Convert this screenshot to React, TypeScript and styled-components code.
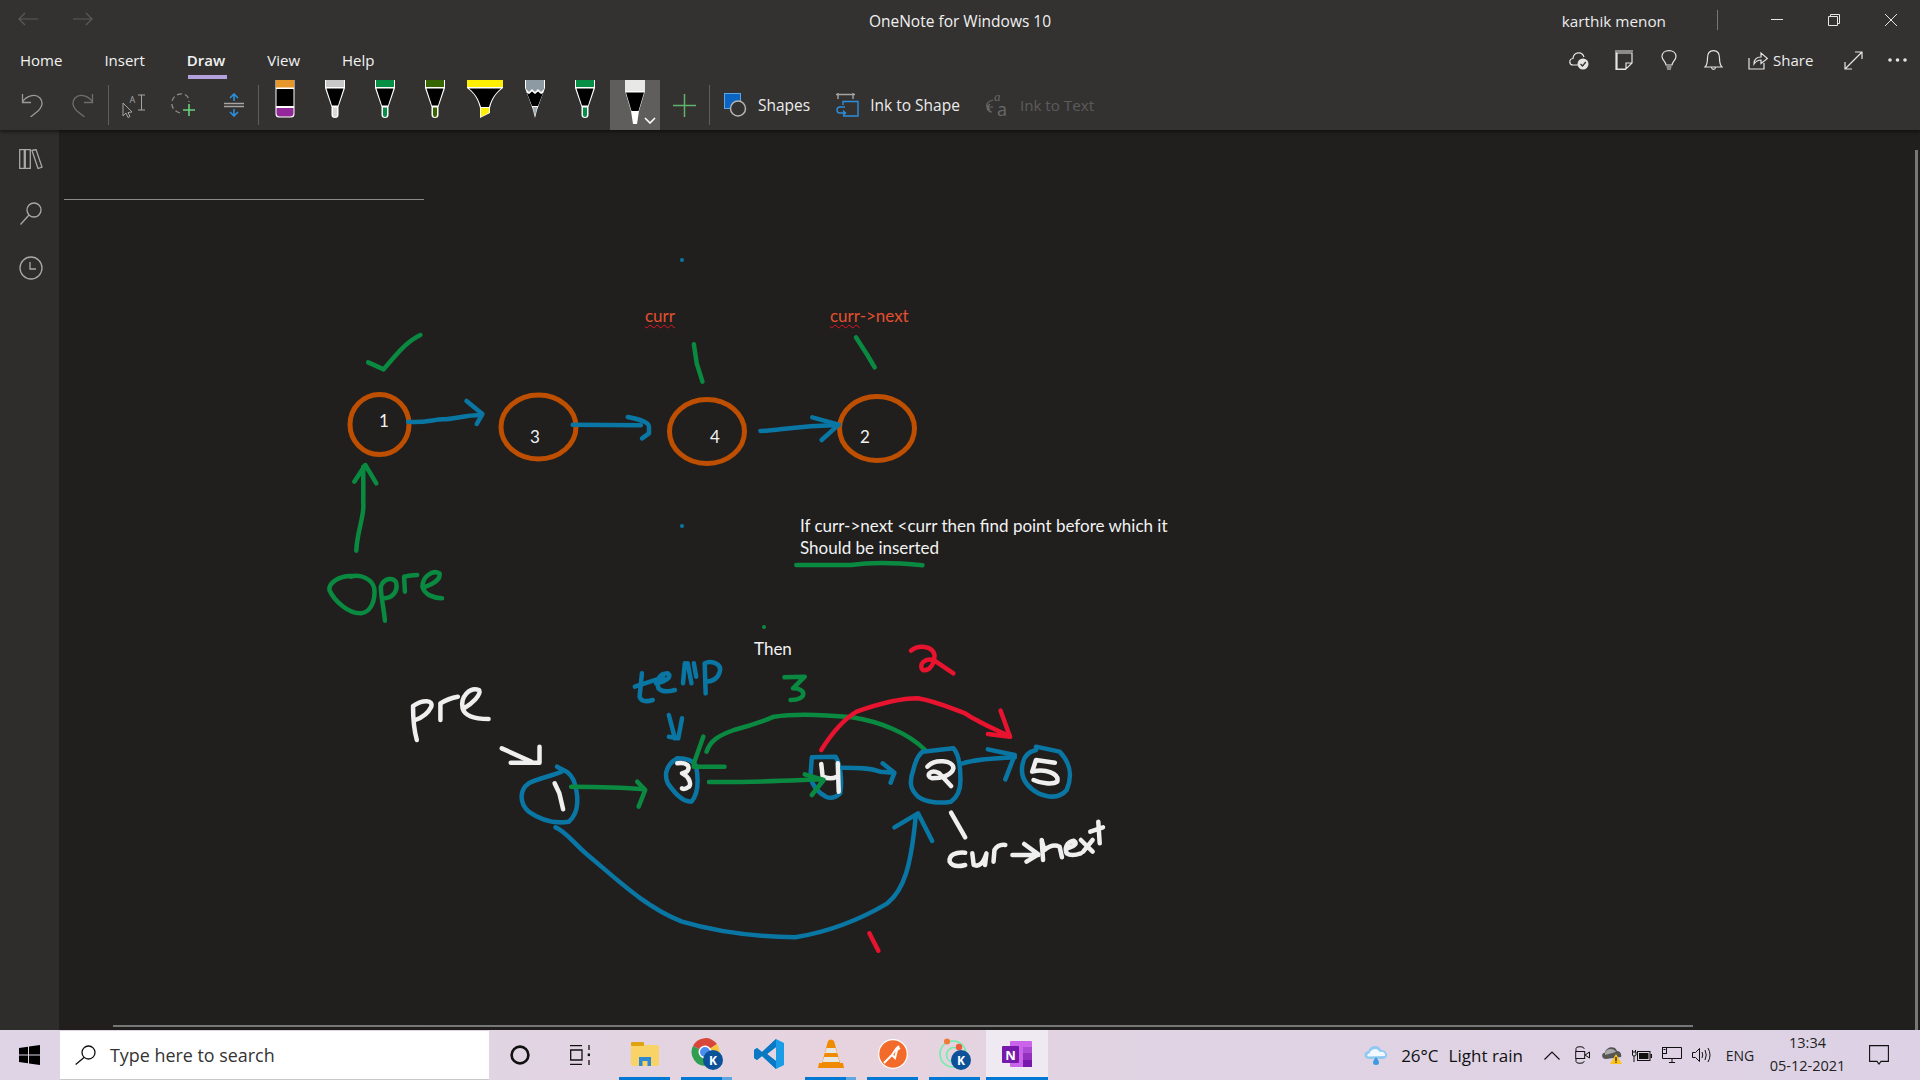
import styled, { createGlobalStyle } from "styled-components";

const GlobalStyle = createGlobalStyle`
  html, body {
    margin: 0;
    padding: 0;
    width: 1920px;
    height: 1080px;
    overflow: hidden;
    background: #201f1e;
    font-family: "Open Sans", "Noto Sans", sans-serif;
  }
`;

const CANVAS_X = 59;
const CANVAS_Y = 130;

const ORANGE = "#bf4f00";
const BLUE = "#0a76a4";
const GREEN = "#0a8a40";
const RED = "#e8132f";
const WHITE = "#efefef";

type InkLine = [string, string];

// first group of ink, coordinates read off a crop at (300,290)
const upperInk: InkLine[] = [
  [GREEN, "M167 217 L205 238 C235 195 260 155 295 135"],
  [GREEN, "M138 782 C140 720 158 680 155 640 L155 530"],
  [GREEN, "M133 575 L160 525 L187 580"],
  [GREEN, "M130 858 C95 855 70 880 72 900 C85 935 120 972 150 970 C175 965 185 930 182 895 C178 870 150 850 125 860"],
  [GREEN, "M208 992 C205 950 198 920 198 890 C205 862 232 860 236 880 C240 905 225 925 205 925"],
  [GREEN, "M257 905 L255 860 Q270 855 287 855"],
  [GREEN, "M303 892 C320 885 345 870 342 850 C325 838 300 860 300 890 C305 915 330 925 348 925"],
  [GREEN, "M965 163 L972 220 L986 275"],
  [GREEN, "M1362 142 L1390 195 L1408 232"],
  [GREEN, "M1216 825 L1350 825 Q1420 812 1525 826"],
  [BLUE, "M265 395 C300 400 330 388 350 388 C380 388 400 375 445 375"],
  [BLUE, "M408 333 L447 372 L433 402"],
  [BLUE, "M668 404 L835 406"],
  [BLUE, "M803 381 C830 388 855 395 855 410 L855 430 L838 445"],
  [BLUE, "M1128 423 C1180 420 1210 408 1320 405"],
  [BLUE, "M1255 382 L1320 404 L1278 450"],
];

// second group of ink, coordinates read off a crop at (380,620)
const lowerInk: InkLine[] = [
  [WHITE, "M78 360 C72 330 70 290 70 258 C90 238 115 238 108 262 C100 285 85 295 75 300"],
  [WHITE, "M128 300 L128 250 Q145 235 165 230"],
  [WHITE, "M178 265 C195 250 215 225 210 210 C190 200 170 230 175 265 C180 290 205 297 230 297"],
  [WHITE, "M258 385 L320 425"],
  [WHITE, "M338 380 L338 428 L277 428"],
  [BLUE, "M375 440 C385 450 400 450 410 480 C420 520 425 575 400 605 C370 612 340 600 315 575 C295 550 295 510 315 490 C335 475 360 470 385 455"],
  [WHITE, "M370 490 L380 520 L388 568"],
  [GREEN, "M405 500 C450 500 500 500 560 508"],
  [GREEN, "M545 485 L562 510 L548 560"],
  [BLUE, "M540 200 L600 172"],
  [BLUE, "M555 160 L550 230 Q555 250 578 240"],
  [BLUE, "M585 190 C605 185 620 170 610 160 C590 160 585 185 590 205 Q600 220 625 210"],
  [BLUE, "M642 190 L646 130 M652 130 L660 190 M665 130 L670 170"],
  [BLUE, "M690 220 L688 130 C700 120 725 130 720 155 C715 180 700 185 690 185"],
  [BLUE, "M612 285 L625 355"],
  [BLUE, "M640 295 L632 355 L612 350"],
  [BLUE, "M630 415 C650 415 665 420 670 440 C675 480 675 520 660 545 C640 545 625 520 610 490 C600 460 610 430 630 415"],
  [WHITE, "M630 430 C650 425 660 440 650 455 L640 460 C655 470 660 490 655 500 Q645 510 640 505"],
  [GREEN, "M685 350 L665 430 L665 440 L730 440"],
  [GREEN, "M692 395 C700 360 720 345 750 330 C790 315 810 305 835 290 C880 280 950 285 1000 292 C1060 305 1120 340 1155 390"],
  [GREEN, "M857 172 L900 170 L875 205 C905 205 905 240 870 240"],
  [BLUE, "M915 412 L965 410 C975 430 980 480 975 520 Q960 540 945 530 C925 515 915 490 912 470 Z"],
  [WHITE, "M935 432 L938 470 Q955 480 968 470 M970 430 L972 515"],
  [GREEN, "M697 486 C780 488 860 482 935 478"],
  [GREEN, "M900 463 L940 480 L915 525"],
  [BLUE, "M980 443 C1010 443 1040 443 1060 455 L1088 458"],
  [BLUE, "M1065 430 L1090 458 L1082 488"],
  [BLUE, "M1150 395 L1215 385 C1225 400 1230 430 1230 480 C1230 510 1225 530 1210 545 C1190 550 1160 550 1140 530 C1125 510 1120 490 1130 450 C1135 420 1140 405 1150 395 Z"],
  [WHITE, "M1160 440 C1175 415 1215 420 1215 445 C1212 465 1190 475 1170 475 C1155 470 1165 445 1185 460 L1210 498"],
  [BLUE, "M1235 430 C1270 415 1310 415 1345 412"],
  [BLUE, "M1288 388 L1345 405 L1325 478"],
  [BLUE, "M1390 380 L1440 395 C1460 425 1470 460 1455 510 C1440 535 1420 535 1395 520 C1370 500 1355 470 1362 430 C1365 405 1375 395 1390 390"],
  [WHITE, "M1430 428 L1390 420 L1382 455 C1410 445 1440 460 1435 485 C1425 495 1400 490 1385 480"],
  [RED, "M935 390 C955 345 980 300 1010 275 C1050 255 1100 235 1140 235 C1180 245 1210 265 1240 280 C1265 305 1300 325 1335 350"],
  [RED, "M1315 272 L1335 350 L1288 342"],
  [RED, "M1125 92 C1140 75 1170 75 1175 105 C1175 130 1165 155 1150 150 C1140 135 1155 110 1175 122 L1215 160"],
  [RED, "M1037 940 L1056 992"],
  [BLUE, "M372 622 C395 635 410 670 440 705 C500 775 560 860 640 905 C700 930 780 950 880 952 C950 935 1010 905 1075 850 C1110 810 1125 740 1135 590"],
  [BLUE, "M1090 622 L1140 580 L1170 663"],
  [WHITE, "M1210 578 L1240 652"],
  [WHITE, "M1240 698 C1220 695 1205 705 1207 725 Q1215 745 1240 735"],
  [WHITE, "M1255 700 L1258 735 Q1275 745 1285 700 L1282 735"],
  [WHITE, "M1300 725 L1302 690 Q1310 672 1325 675"],
  [WHITE, "M1340 705 L1395 705 M1365 672 L1395 703 L1370 725"],
  [WHITE, "M1405 720 L1402 660 L1408 690 Q1425 670 1440 680 L1445 712"],
  [WHITE, "M1455 685 C1470 680 1480 670 1470 662 C1455 665 1450 685 1455 700 Q1465 710 1485 700"],
  [WHITE, "M1485 660 L1510 695 M1510 660 L1490 695"],
  [WHITE, "M1522 605 L1525 670 M1505 635 L1532 622"],
];

const circles = [
  { cx: 379.5, cy: 424.5, rx: 29.5, ry: 30 },
  { cx: 538.5, cy: 427, rx: 37.5, ry: 32 },
  { cx: 707, cy: 431.5, rx: 37.5, ry: 32 },
  { cx: 877, cy: 428.5, rx: 37.5, ry: 32 },
];

const dots = [
  { x: 682, y: 260, c: BLUE },
  { x: 682, y: 526, c: BLUE },
  { x: 764, y: 627, c: GREEN },
];

const numbers = [
  { n: "1", x: 379, y: 421 },
  { n: "3", x: 530, y: 437 },
  { n: "4", x: 710, y: 437 },
  { n: "2", x: 860, y: 437 },
];

const pens = [
  { band: "#c8c8c8", tip: "#d9d9d9" },
  { band: "#068f45", tip: "#068f45" },
  { band: "#376500", tip: "#376500" },
];

export default function App() {
  return (
    <Page>
      <GlobalStyle />
      <Header>
        <TitleRow>
          <NavArrows>
            <svg width="20" height="14" viewBox="0 0 20 14" fill="none" stroke="#5b5a59" strokeWidth="1.2">
              <path d="M1 7 H20 M7 1 L1 7 L7 13" />
            </svg>
            <svg width="20" height="14" viewBox="0 0 20 14" fill="none" stroke="#5b5a59" strokeWidth="1.2">
              <path d="M0 7 H19 M13 1 L19 7 L13 13" />
            </svg>
          </NavArrows>
          <AppTitle>OneNote for Windows 10</AppTitle>
          <WindowArea>
            <UserName>karthik menon</UserName>
            <TitleDivider />
            <WindowButton>
              <svg width="12" height="2" viewBox="0 0 12 2"><rect width="12" height="1" fill="#e6e6e6" /></svg>
            </WindowButton>
            <WindowButton>
              <svg width="12" height="12" viewBox="0 0 12 12" fill="none" stroke="#e6e6e6">
                <path d="M2.5 2.5 V0.5 H11.5 V9.5 H9.5 M0.5 2.5 H9.5 V11.5 H0.5 Z" />
              </svg>
            </WindowButton>
            <WindowButton>
              <svg width="12" height="12" viewBox="0 0 12 12" stroke="#e6e6e6"><path d="M0 0 L12 12 M12 0 L0 12" /></svg>
            </WindowButton>
          </WindowArea>
        </TitleRow>

        <TabRow>
          <Tabs>
            <Tab>Home</Tab>
            <Tab>Insert</Tab>
            <Tab $active>Draw</Tab>
            <Tab>View</Tab>
            <Tab>Help</Tab>
          </Tabs>
          <TabActions>
            <ActionSlot>
              <svg width="21" height="19" viewBox="0 0 21 19" fill="none" stroke="#e4e4e4" strokeWidth="1.2">
                <path d="M11 14 H5 C1 14 0.5 8 5 7.5 C5.5 1 14 -0.5 16 6" />
                <circle cx="15" cy="13" r="5.5" fill="#e4e4e4" stroke="none" />
                <path d="M12.5 13 L14.5 15 L17.8 11" stroke="#333231" strokeWidth="1.3" />
              </svg>
            </ActionSlot>
            <ActionSlot>
              <svg width="20" height="20" viewBox="0 0 20 20" fill="none" stroke="#e4e4e4" strokeWidth="1.2">
                <path d="M1 1 H19 M3 3 H18 V13 L12 19 H3 Z M2 2 V19.5 H12 M18 13 H12 V19" />
              </svg>
            </ActionSlot>
            <ActionSlot>
              <svg width="16" height="21" viewBox="0 0 16 21" fill="none" stroke="#e4e4e4" strokeWidth="1.2">
                <path d="M5 15 C4.5 11 1 10 1 6.5 C1 3 4 0.7 8 0.7 C12 0.7 15 3 15 6.5 C15 10 11.5 11 11 15 Z M5.5 17 H10.5 M6 19 H10" />
              </svg>
            </ActionSlot>
            <ActionSlot>
              <svg width="19" height="21" viewBox="0 0 19 21" fill="none" stroke="#e4e4e4" strokeWidth="1.2">
                <path d="M1 17 C3 15 3.5 13 3.5 8 C3.5 3 6 0.7 9.5 0.7 C13 0.7 15.5 3 15.5 8 C15.5 13 16 15 18 17 Z M7.5 17.5 C8 20 11 20 11.5 17.5" />
              </svg>
            </ActionSlot>
            <ShareButton>
              <svg width="20" height="20" viewBox="0 0 20 20" fill="none" stroke="#e4e4e4" strokeWidth="1.2">
                <path d="M1 8 V19 H16 V13 M6 14 C6 9 9 7 13 7 V3 L19.5 8.5 L13 13.5 V10 C10 10 8 11 6 14 Z" />
              </svg>
              <ShareLabel>Share</ShareLabel>
            </ShareButton>
            <ActionSlot $w={44}>
              <svg width="19" height="19" viewBox="0 0 19 19" fill="none" stroke="#e4e4e4" strokeWidth="1.2">
                <path d="M1 18 L18 1 M11 1 H18 V8 M1 11 V18 H8" />
              </svg>
            </ActionSlot>
            <ActionSlot>
              <svg width="19" height="4" viewBox="0 0 19 4" fill="#e4e4e4">
                <circle cx="2" cy="2" r="1.8" /><circle cx="9.5" cy="2" r="1.8" /><circle cx="17" cy="2" r="1.8" />
              </svg>
            </ActionSlot>
          </TabActions>
        </TabRow>

        <Toolbar>
          <ToolSlot $w={50}>
            <svg width="22" height="24" viewBox="0 0 22 24" fill="none" stroke="#9b9a99" strokeWidth="1.3">
              <path d="M1.5 1 V9.5 H10 M1.5 9 C5 3 14 0 19 5 C23 10 20 15 17 18 L9.5 24" />
            </svg>
          </ToolSlot>
          <ToolSlot $w={51}>
            <svg width="22" height="24" viewBox="0 0 22 24" fill="none" stroke="#6f6e6d" strokeWidth="1.3">
              <path d="M20.5 1 V9.5 H12 M20.5 9 C17 3 8 0 3 5 C-1 10 2 15 5 18 L12.5 24" />
            </svg>
          </ToolSlot>
          <ToolDivider />
          <ToolSlot $w={50}>
            <svg width="24" height="26" viewBox="0 -2 24 26" fill="none" stroke="#a5a4a3" strokeWidth="1">
              <path d="M1 9 L1 22 L4 19 L6 23.5 L8 22.5 L6 18.5 L10 18 Z" />
              <path d="M16 1 H23 M19.5 1 V16 M16 16 H23" />
              <text x="7.5" y="9" fontSize="9" fill="#a5a4a3" stroke="none" fontFamily="Open Sans, sans-serif">A</text>
            </svg>
          </ToolSlot>
          <ToolSlot $w={50}>
            <svg width="26" height="24" viewBox="0 0 26 24" fill="none">
              <path d="M9 20 C3 18 0 14 1 8.5 C2 3 7 0.5 12 1 C16 1.5 18 5 18 9" stroke="#8e8d8c" strokeWidth="1.3" strokeDasharray="5 3" />
              <path d="M18 11 V23 M12 17 H24" stroke="#6ad07b" strokeWidth="1.6" />
            </svg>
          </ToolSlot>
          <ToolSlot $w={49}>
            <svg width="22" height="24" viewBox="0 0 22 24" fill="none">
              <path d="M1 10.5 H21 M1 13.5 H21" stroke="#a5a4a3" strokeWidth="1.6" />
              <path d="M11 1 V8 M7 5 L11 1 L15 5 M11 16 V23 M7 19 L11 23 L15 19" stroke="#2b8fdc" strokeWidth="1.6" />
            </svg>
          </ToolSlot>
          <ToolDivider />
          <PenSlot $w={51}>
            <svg width="20" height="38" viewBox="0 0 20 38">
              <path d="M0.5 0 H19.5 V34 Q19.5 37.5 16 37.5 H4 Q0.5 37.5 0.5 34 Z" fill="#fff" />
              <rect x="1" width="18" height="7.5" fill="#e6962a" />
              <rect x="1.5" y="9" width="17" height="17" fill="#000" />
              <path d="M1.5 28 H18.5 V33 Q18.5 36.5 15 36.5 H5 Q1.5 36.5 1.5 33 Z" fill="#93289a" />
            </svg>
          </PenSlot>
          {pens.map((p) => (
            <PenSlot key={p.band} $w={50}>
              <PenGlyph band={p.band} tip={p.tip} />
            </PenSlot>
          ))}
          <PenSlot $w={50}>
            <svg width="36" height="38" viewBox="0 0 36 38">
              <path d="M0 0 H36 V8 C28 14 25 20 23 28 V33 L13 38 V28 C11 20 8 14 0 8 Z" fill="#fff" />
              <rect width="36" height="7" fill="#ffef00" />
              <path d="M2 8.5 H34 C27 14 24 20 22 27 H14 C12 20 9 14 2 8.5 Z" fill="#000" />
              <path d="M14 28 H22 V32.5 L14 37 Z" fill="#ffef00" />
            </svg>
          </PenSlot>
          <PenSlot $w={50}>
            <svg width="20" height="38" viewBox="0 0 20 38">
              <path d="M0 0 H20 V8 L12 30 L10 38 L8 30 L0 8 Z" fill="#fff" />
              <path d="M1 0 H19 V9 L16 12 L13 9 L10 12 L7 9 L4 12 L1 9 Z" fill="#8d9aa3" />
              <path d="M2 13 L4 14 L7 11.5 L10 14 L13 11.5 L16 14 L18 13 L13 26 H7 Z" fill="#000" />
              <path d="M7.8 27 H12.2 L10 36 Z" fill="#9dabb5" />
            </svg>
          </PenSlot>
          <PenSlot $w={50}>
            <PenGlyph band="#068f45" tip="#068f45" />
          </PenSlot>
          <SelectedPen>
            <svg width="22" height="45" viewBox="0 0 22 45">
              <path d="M1 0 H21 V11 L15 31 L13 44 H9 L7 31 L1 11 Z" fill="#fff" />
              <rect x="1" width="20" height="11" fill="#e8e8e6" />
              <path d="M2 12.5 H20 L14.5 31 H7.5 Z" fill="#000" />
            </svg>
            <PenChevron width="12" height="7" viewBox="0 0 12 7" fill="none" stroke="#fff" strokeWidth="1.6">
              <path d="M1 1 L6 6 L11 1" />
            </PenChevron>
          </SelectedPen>
          <ToolSlot $w={49}>
            <svg width="23" height="23" viewBox="0 0 23 23" stroke="#5fb36a" strokeWidth="1.5">
              <path d="M11.5 0 V23 M0 11.5 H23" />
            </svg>
          </ToolSlot>
          <ToolDivider />
          <TextTool $left={14}>
            <svg width="23" height="24" viewBox="0 0 23 24">
              <rect x="0.5" y="0.5" width="16" height="15" fill="#0a64c0" stroke="#5aa5e6" />
              <circle cx="14" cy="15.5" r="7.5" fill="#333231" stroke="#b5b4b3" strokeWidth="1.5" />
            </svg>
            <ToolLabel>Shapes</ToolLabel>
          </TextTool>
          <TextTool $left={26}>
            <svg width="23" height="24" viewBox="0 0 23 24" fill="none">
              <path d="M0 1.5 H19 M2 0 V6 M17 0 V6" stroke="#a5a4a3" strokeWidth="1.4" />
              <path d="M7 12 V8.5 H22 V23 H7" stroke="#2b8fdc" strokeWidth="1.4" />
              <path d="M9 14 H4 C0 14 0 20 4 20 H9 M7 17.5 L9.5 20 L7 22.5" stroke="#2b8fdc" strokeWidth="1.4" />
            </svg>
            <ToolLabel>Ink to Shape</ToolLabel>
          </TextTool>
          <TextTool $left={26}>
            <svg width="23" height="34" viewBox="0 -4 23 34" fill="none" stroke="#6a6968" strokeWidth="1.2">
              <text x="8" y="9" fontSize="13" fontStyle="italic" fill="#6a6968" stroke="none" fontFamily="Liberation Serif, serif">a</text>
              <path d="M7 8 C2 9 0 12 1 15 M0.5 15 H7 M4 18 L1 15 L4 12 M1 16 C2 19 4 20 6 20" />
              <text x="11" y="24" fontSize="18" fill="#6a6968" stroke="none" fontFamily="Open Sans, sans-serif">a</text>
            </svg>
            <ToolLabel $dim>Ink to Text</ToolLabel>
          </TextTool>
        </Toolbar>
      </Header>

      <Main>
        <Sidebar>
          <RailIcon>
            <svg width="24" height="20" viewBox="0 0 24 20" fill="none" stroke="#a9a8a7" strokeWidth="1.3">
              <path d="M0.7 0.7 H5.3 V19.3 H0.7 Z M6.3 0.7 H11.3 V19.3 H6.3 Z M13 1.5 L17 0.5 L23 18 L19 19.5 Z" />
            </svg>
          </RailIcon>
          <RailIcon>
            <svg width="22" height="23" viewBox="0 0 22 23" fill="none" stroke="#a9a8a7" strokeWidth="1.3">
              <circle cx="14" cy="8" r="7" />
              <path d="M9 13 L0.5 22.5" />
            </svg>
          </RailIcon>
          <RailIcon>
            <svg width="24" height="24" viewBox="0 0 24 24" fill="none" stroke="#a9a8a7" strokeWidth="1.3">
              <circle cx="12" cy="12" r="11" />
              <path d="M11 6 V13 H17" />
            </svg>
          </RailIcon>
        </Sidebar>
        <Canvas>
          <InkLayer width="1861" height="900" viewBox={`${CANVAS_X} ${CANVAS_Y} 1861 900`}>
            {circles.map((c) => (
              <OrangeRing key={c.cx} cx={c.cx} cy={c.cy} rx={c.rx} ry={c.ry} />
            ))}
            <g transform="translate(300 290) scale(0.40816 0.33333)">
              {upperInk.map(([color, d], i) => (
                <Stroke key={i} $color={color} d={d} />
              ))}
            </g>
            <g transform="translate(380 620) scale(0.47194 0.33333)">
              {lowerInk.map(([color, d], i) => (
                <Stroke key={i} $color={color} d={d} />
              ))}
            </g>
            {dots.map((d) => (
              <circle key={d.y} cx={d.x} cy={d.y} r="2" fill={d.c} />
            ))}
          </InkLayer>
          <PageRule />
          {numbers.map((n) => (
            <Note key={n.n} $x={n.x} $y={n.y}>
              {n.n}
            </Note>
          ))}
          <Note $x={645} $y={316} $color="#e2502f">
            <Misspelt>curr</Misspelt>
          </Note>
          <Note $x={830} $y={316} $color="#e2502f">
            <Misspelt>curr</Misspelt>-&gt;next
          </Note>
          <Note $x={800} $y={526}>If curr-&gt;next &lt;curr then find point before which it</Note>
          <Note $x={800} $y={548}>Should be inserted</Note>
          <Note $x={754} $y={649}>Then</Note>
          <VerticalThumb />
          <HorizontalThumb />
        </Canvas>
      </Main>

      <Taskbar>
        <StartSlot>
          <svg width="21" height="20" viewBox="0 0 21 20" fill="#000">
            <path d="M0 3 L9 1.7 V9.5 H0 Z M10 1.5 L21 0 V9.5 H10 Z M0 10.5 H9 V18.3 L0 17 Z M10 10.5 H21 V20 L10 18.5 Z" />
          </svg>
        </StartSlot>
        <SearchBox>
          <svg width="21" height="20" viewBox="0 0 21 20" fill="none" stroke="#111" strokeWidth="1.3">
            <circle cx="13.5" cy="7.5" r="6.5" />
            <path d="M9 12.5 L0.7 19.5" />
          </svg>
          <SearchText>Type here to search</SearchText>
        </SearchBox>
        <PinnedSlot $w={62}>
          <svg width="20" height="20" viewBox="0 0 20 20" fill="none" stroke="#111" strokeWidth="2.6">
            <circle cx="10" cy="10" r="8.4" />
          </svg>
        </PinnedSlot>
        <PinnedSlot $w={58}>
          <svg width="20" height="20" viewBox="0 0 20 20" fill="none" stroke="#111" strokeWidth="1.3">
            <path d="M0 0.7 H12 M0 19.3 H12 M0.7 5 H12 V15 H0.7 Z M19 0 V5 M19 15 V20" />
            <rect x="17.7" y="8.5" width="2.6" height="2.6" fill="#111" stroke="none" />
          </svg>
        </PinnedSlot>
        <TaskApps>
          <TaskApp $open>
            <svg width="28" height="24" viewBox="0 0 28 24">
              <path d="M0 1.5 Q0 0 1.5 0 H11 L14 3 H26 Q28 3 28 5 V22 Q28 24 26 24 H2 Q0 24 0 22 Z" fill="#f9d366" />
              <rect y="0" width="13" height="4" rx="1" fill="#dfa312" />
              <path d="M8 24 V15 H20 V24 H16.5 V19 H11.5 V24 Z" fill="#2f88d2" />
            </svg>
          </TaskApp>
          <TaskApp $open $stacked>
            <svg width="32" height="32" viewBox="0 0 32 32">
              <path d="M14 14 L2 8 A14 14 0 0 1 26 6 Z" fill="#d9463a" />
              <path d="M14 14 L26 6 A14 14 0 0 1 16 28 Z" fill="#f6c63c" />
              <path d="M14 14 L16 28 A14 14 0 0 1 2 8 Z" fill="#2f9e50" />
              <circle cx="14" cy="14" r="6.5" fill="#fff" />
              <circle cx="14" cy="14" r="5" fill="#4a8df0" />
              <circle cx="22" cy="22" r="10" fill="#0b5299" />
              <BadgeText x="22" y="26.5">K</BadgeText>
            </svg>
          </TaskApp>
          <TaskApp>
            <svg width="30" height="30" viewBox="0 0 30 30">
              <path d="M22 0 L30 4 V26 L22 30 L8 17 L3 21 L0 19 V11 L3 9 L8 13 Z M22 8 L13 15 L22 22 Z" fill="#1a9ce6" />
              <path d="M22 0 L8 13 L3 9 L0 11 V19 L3 21 L8 17 L22 30 Z M22 8 L13 15 L22 22 Z" fill="#0a78c2" fillRule="evenodd" />
            </svg>
          </TaskApp>
          <TaskApp $open $stacked>
            <svg width="26" height="30" viewBox="0 0 26 30">
              <path d="M1 24 L4 24 L10 2 Q13 -1 16 2 L22 24 L25 24 L26 29 H0 Z" fill="#f08a00" />
              <path d="M8.5 9 H17.5 L19 14 H7 Z M6 18 H20 L21.5 23 H4.5 Z" fill="#e8e6e1" />
            </svg>
          </TaskApp>
          <TaskApp $open>
            <svg width="30" height="30" viewBox="0 0 30 30">
              <circle cx="15" cy="15" r="14.3" fill="#f36b2a" stroke="#fff" strokeWidth="1.2" />
              <path d="M6 24 L14 16 L17 19 L19 11 L22 9 M14 16 L18 10 L21 7" fill="none" stroke="#fff" strokeWidth="2" />
            </svg>
          </TaskApp>
          <TaskApp $open>
            <svg width="32" height="32" viewBox="0 0 32 32" fill="none">
              <circle cx="14" cy="16" r="13" stroke="#6df0a8" strokeWidth="1.6" />
              <circle cx="15" cy="17" r="7.5" stroke="#6df0a8" strokeWidth="1.6" />
              <circle cx="8" cy="3.5" r="3" fill="#ef7a3a" />
              <circle cx="20" cy="9" r="3.2" fill="#ee5a3a" />
              <circle cx="22" cy="22" r="10" fill="#0b5299" />
              <BadgeText x="22" y="26.5">K</BadgeText>
            </svg>
          </TaskApp>
          <TaskApp $open $active>
            <svg width="30" height="26" viewBox="0 0 30 26">
              <rect x="8" width="22" height="26" rx="1" fill="#ca64ea" />
              <rect x="21" y="6" width="9" height="7" fill="#ae4bd5" />
              <rect x="21" y="12" width="9" height="7" fill="#9332bf" />
              <rect x="21" y="19" width="9" height="7" fill="#7719aa" />
              <rect y="5" width="17" height="17" rx="1" fill="#7719aa" />
              <BadgeText x="8.5" y="18.5" $size={13}>N</BadgeText>
            </svg>
          </TaskApp>
        </TaskApps>
        <Tray>
          <Weather>
            <svg width="26" height="20" viewBox="0 0 26 20">
              <path d="M6 14 C0 14 0 6.5 5.5 6 C7 0 16 -1 18 5 C24 4.5 27 13 20 14 Z" fill="#8fc9f2" />
              <path d="M6.5 8.5 C8 3 15 2.5 16.5 7 C20 6 23 8.5 22 11 L5 11.5 C3.5 10.5 4.5 8.5 6.5 8.5 Z" fill="#f2f9fe" />
              <path d="M13 12 C15 15 16 16 16 17.5 A3 2.5 0 0 1 10 17.5 C10 16 11 15 13 12 Z" fill="#3d9ae0" />
            </svg>
            <WeatherText>26°C</WeatherText>
            <WeatherText $gap={10}>Light rain</WeatherText>
          </Weather>
          <TraySlot>
            <svg width="16" height="9" viewBox="0 0 16 9" fill="none" stroke="#111" strokeWidth="1.2"><path d="M0.5 8.5 L8 1 L15.5 8.5" /></svg>
          </TraySlot>
          <TraySlot>
            <svg width="15" height="18" viewBox="0 0 15 18" fill="none" stroke="#111" strokeWidth="1">
              <path d="M1 5 V2.5 Q1 0.7 5 0.7 Q9 0.7 9 2.5 V3 M1 13 V15.5 Q1 17.3 5 17.3 Q9 17.3 9 15.5 V15" />
              <rect x="0.7" y="5.5" width="9" height="7" />
              <path d="M10 9 L14.5 6 V12 Z" />
            </svg>
          </TraySlot>
          <TraySlot>
            <svg width="20" height="18" viewBox="0 0 20 18">
              <path d="M4 13 C-1 13 -1 7 3 6.5 C4 1 13 -1 15 5 C18 5 20 8 19 11 L4 13 Z" fill="#555" />
              <path d="M3 7 C4 3 11 1 14 6 L3 9 Z" fill="#aaa" />
              <path d="M14 8 L20 18 H8 Z" fill="#fcc419" />
              <rect x="13.4" y="11" width="1.2" height="4" fill="#111" />
              <rect x="13.4" y="15.6" width="1.2" height="1.2" fill="#111" />
            </svg>
          </TraySlot>
          <TraySlot>
            <svg width="20" height="13" viewBox="0 0 20 13" fill="none" stroke="#111">
              <path d="M0.5 3 V6 Q0.5 7 2 7 V13 M0.5 1 V3 M3.5 1 V3 M0 3 H4 V6 Q4 7 2 7" />
              <rect x="5.5" y="2.5" width="12.5" height="9" />
              <rect x="7" y="4" width="9.5" height="6" fill="#111" stroke="none" />
              <rect x="18.5" y="5" width="1.5" height="4" fill="#111" stroke="none" />
            </svg>
          </TraySlot>
          <TraySlot>
            <svg width="20" height="16" viewBox="0 0 20 16" fill="none" stroke="#111">
              <path d="M4.5 0.5 H19.5 V11.5 H0.5 V6 M7 15.5 H13 M10 11.5 V15.5" />
              <rect x="0.5" y="0.5" width="4" height="6" fill="#dfd3e3" />
              <rect x="1.5" y="2" width="2" height="1" fill="#111" stroke="none" />
            </svg>
          </TraySlot>
          <TraySlot>
            <svg width="20" height="16" viewBox="0 0 20 16" fill="none" stroke="#111">
              <path d="M0.5 5.5 H3.5 L7.5 1.5 V14.5 L3.5 10.5 H0.5 Z" />
              <path d="M10 5 Q11.5 8 10 11 M13 3 Q15.5 8 13 13 M16 1 Q20 8 16 15" />
            </svg>
          </TraySlot>
          <LangSlot>ENG</LangSlot>
          <Clock>
            <span>13:34</span>
            <span>05-12-2021</span>
          </Clock>
          <NotifySlot>
            <svg width="20" height="20" viewBox="0 0 20 20" fill="none" stroke="#111" strokeWidth="1.1">
              <path d="M0.6 0.6 H19.4 V16.4 H12 L10 19 L8 16.4 H0.6 Z" />
            </svg>
          </NotifySlot>
        </Tray>
      </Taskbar>
    </Page>
  );
}

function PenGlyph({ band, tip }: { band: string; tip: string }) {
  return (
    <svg width="20" height="38" viewBox="0 0 20 38">
      <path d="M0 0 H20 V8 L13.5 27 V35 Q13.5 38 10 38 Q6.5 38 6.5 35 V27 L0 8 Z" fill="#fff" />
      <rect x="1" width="18" height="7" fill={band} />
      <path d="M1.5 8.5 H18.5 L13 25.5 H7 Z" fill="#000" />
      <path d="M8 27.5 H12 V34.5 Q12 37 10 37 Q8 37 8 34.5 Z" fill={tip} />
    </svg>
  );
}

const Page = styled.div`
  display: flex;
  flex-direction: column;
  width: 1920px;
  height: 1080px;
`;

const Header = styled.header`
  position: relative;
  z-index: 2;
  flex: none;
  height: 130px;
  background: #333231;
  color: #f2f2f2;
  box-shadow: 0 2px 3px rgba(0, 0, 0, 0.45);
`;

const TitleRow = styled.div`
  display: grid;
  grid-template-columns: 1fr auto 1fr;
  align-items: center;
  height: 40px;
`;

const NavArrows = styled.div`
  display: flex;
  align-items: center;
  gap: 35px;
  padding: 0 0 2px 18px;
`;

const AppTitle = styled.div`
  font-size: 15.5px;
  padding-top: 2px;
  color: #f0f0f0;
`;

const WindowArea = styled.div`
  display: flex;
  align-items: center;
  justify-content: flex-end;
  height: 40px;
  padding-right: 1px;
`;

const UserName = styled.span`
  font-size: 15.3px;
  padding-top: 1px;
  color: #ececec;
`;

const TitleDivider = styled.i`
  width: 1px;
  height: 20px;
  margin: 0 30px 0 51px;
  background: #777;
`;

const WindowButton = styled.div`
  display: flex;
  align-items: center;
  justify-content: center;
  width: 57px;
  height: 40px;
`;

const TabRow = styled.div`
  display: flex;
  justify-content: space-between;
  height: 40px;
`;

const Tabs = styled.nav`
  display: flex;
  gap: 42px;
  padding-left: 20px;
`;

const Tab = styled.div<{ $active?: boolean }>`
  position: relative;
  display: flex;
  align-items: center;
  height: 40px;
  font-size: 15px;
  font-weight: ${({ $active }) => ($active ? 600 : 400)};
  color: #f2f2f2;

  ${({ $active }) =>
    $active
      ? `&::after {
          content: "";
          position: absolute;
          left: 1px;
          right: -2px;
          bottom: 1px;
          height: 4px;
          background: #b4a0dc;
        }`
      : ""}
`;

const TabActions = styled.div`
  display: flex;
  align-items: center;
`;

const ActionSlot = styled.div<{ $w?: number }>`
  display: flex;
  align-items: center;
  justify-content: center;
  width: ${({ $w }) => $w ?? 45}px;
  height: 40px;
`;

const ShareButton = styled.div`
  display: flex;
  align-items: center;
  gap: 5px;
  width: 95px;
  padding-left: 12px;
  box-sizing: border-box;
`;

const ShareLabel = styled.span`
  font-size: 15px;
  color: #ececec;
`;

const Toolbar = styled.div`
  display: flex;
  align-items: center;
  height: 50px;
  padding-left: 7px;
`;

const ToolSlot = styled.div<{ $w: number }>`
  display: flex;
  align-items: center;
  justify-content: center;
  flex: none;
  width: ${({ $w }) => $w}px;
  height: 50px;
`;

const PenSlot = styled(ToolSlot)`
  align-items: flex-start;
`;

const ToolDivider = styled.i`
  flex: none;
  width: 1px;
  height: 40px;
  background: #5f5e5d;
`;

const SelectedPen = styled.div`
  position: relative;
  display: flex;
  justify-content: flex-start;
  flex: none;
  width: 50px;
  height: 50px;
  padding-left: 14px;
  box-sizing: border-box;
  background: #5f5e5d;
`;

const PenChevron = styled.svg`
  position: absolute;
  right: 4px;
  bottom: 6px;
`;

const TextTool = styled.div<{ $left: number }>`
  display: flex;
  align-items: center;
  gap: 11px;
  margin-left: ${({ $left }) => $left}px;
`;

const ToolLabel = styled.span<{ $dim?: boolean }>`
  font-size: ${({ $dim }) => ($dim ? 15.2 : 15.5)}px;
  color: ${({ $dim }) => ($dim ? "#5c5b5a" : "#ececec")};
`;

const Main = styled.main`
  display: flex;
  flex: none;
  height: 900px;
`;

const Sidebar = styled.aside`
  display: flex;
  flex-direction: column;
  flex: none;
  width: 59px;
  padding: 2px 0 0 2px;
  box-sizing: border-box;
  background: #2e2d2c;
`;

const RailIcon = styled.div`
  display: flex;
  align-items: center;
  justify-content: center;
  height: 54.5px;
`;

const Canvas = styled.section`
  position: relative;
  flex: 1;
  overflow: hidden;
  background: #201f1e;
`;

const InkLayer = styled.svg`
  position: absolute;
  left: 0;
  top: 0;
`;

const OrangeRing = styled.ellipse`
  fill: none;
  stroke: ${ORANGE};
  stroke-width: 5;
`;

const Stroke = styled.path<{ $color: string }>`
  fill: none;
  stroke: ${({ $color }) => $color};
  stroke-width: 4.5;
  stroke-linecap: round;
  stroke-linejoin: round;
  vector-effect: non-scaling-stroke;
`;

const PageRule = styled.hr`
  position: absolute;
  left: ${64 - CANVAS_X}px;
  top: ${199 - CANVAS_Y}px;
  width: 360px;
  height: 1px;
  margin: 0;
  border: 0;
  background: #8a8a89;
`;

const Note = styled.div<{ $x: number; $y: number; $color?: string }>`
  position: absolute;
  left: ${({ $x }) => $x - CANVAS_X}px;
  top: ${({ $y }) => $y - CANVAS_Y}px;
  transform: translateY(-50%);
  font-family: Lato, "Open Sans", sans-serif;
  font-size: 17px;
  line-height: 20px;
  white-space: nowrap;
  color: ${({ $color }) => $color ?? "#f2f2f2"};
`;

const Misspelt = styled.span`
  text-decoration: underline wavy #e81123 1px;
  text-underline-offset: 2px;
`;

const VerticalThumb = styled.i`
  position: absolute;
  right: 2px;
  top: 20px;
  bottom: 0;
  width: 3px;
  background: #777;
`;

const HorizontalThumb = styled.i`
  position: absolute;
  left: ${113 - CANVAS_X}px;
  bottom: 3px;
  width: 1580px;
  height: 2px;
  background: #777;
`;

const Taskbar = styled.footer`
  display: flex;
  align-items: stretch;
  flex: none;
  height: 50px;
  background: linear-gradient(90deg, #ded4e6 0%, #e2d4e2 30%, #e7d3de 45%, #e0d3e3 60%, #ddd2e5 100%);
  color: #111;
`;

const StartSlot = styled.div`
  display: flex;
  align-items: center;
  justify-content: center;
  width: 60px;
  padding-right: 1px;
  box-sizing: border-box;
`;

const SearchBox = styled.div`
  display: flex;
  align-items: center;
  gap: 14px;
  width: 429px;
  margin: 1px 0 0;
  padding-left: 15px;
  box-sizing: border-box;
  background: #fff;
  border-bottom: 1px solid #c9c9c9;
`;

const SearchText = styled.span`
  font-size: 17.9px;
  color: #333;
`;

const PinnedSlot = styled.div<{ $w: number }>`
  display: flex;
  align-items: center;
  justify-content: center;
  width: ${({ $w }) => $w}px;
`;

const TaskApps = styled.div`
  display: flex;
  margin-left: 4.5px;
`;

const TaskApp = styled.div<{ $open?: boolean; $active?: boolean; $stacked?: boolean }>`
  position: relative;
  display: flex;
  align-items: center;
  justify-content: center;
  width: 62px;
  padding-bottom: 3px;
  box-sizing: border-box;
  background: ${({ $active }) => ($active ? "#efe9f2" : "transparent")};

  &::after {
    content: "";
    display: ${({ $open }) => ($open ? "block" : "none")};
    position: absolute;
    left: ${({ $active }) => ($active ? 0 : 5)}px;
    right: ${({ $active }) => ($active ? 0 : 6)}px;
    bottom: 0;
    height: 3px;
    background: ${({ $stacked }) =>
      $stacked
        ? "linear-gradient(90deg, #0078d4 80%, #5ea6e0 80%)"
        : "#0078d4"};
  }
`;

const BadgeText = styled.text<{ $size?: number }>`
  font-family: "Open Sans", sans-serif;
  font-size: ${({ $size }) => $size ?? 12}px;
  font-weight: 700;
  fill: #fff;
  text-anchor: middle;
`;

const Tray = styled.div`
  display: flex;
  align-items: center;
  margin-left: auto;
  padding-right: 14px;
`;

const Weather = styled.div`
  display: flex;
  align-items: center;
  margin-right: 14px;

  svg {
    margin-right: 12px;
  }
`;

const WeatherText = styled.span<{ $gap?: number }>`
  font-size: 17px;
  margin-left: ${({ $gap }) => $gap ?? 0}px;
  color: #111;
`;

const TraySlot = styled.div`
  display: flex;
  align-items: center;
  justify-content: center;
  width: 30px;
`;

const LangSlot = styled.div`
  width: 46px;
  text-align: center;
  font-size: 14px;
  color: #222;
`;

const Clock = styled.div`
  display: flex;
  flex-direction: column;
  align-items: center;
  gap: 3px;
  width: 89px;
  padding-bottom: 2px;
  font-size: 14.5px;
  line-height: 20px;
  color: #222;
`;

const NotifySlot = styled.div`
  display: flex;
  align-items: center;
  justify-content: center;
  width: 54px;
`;
